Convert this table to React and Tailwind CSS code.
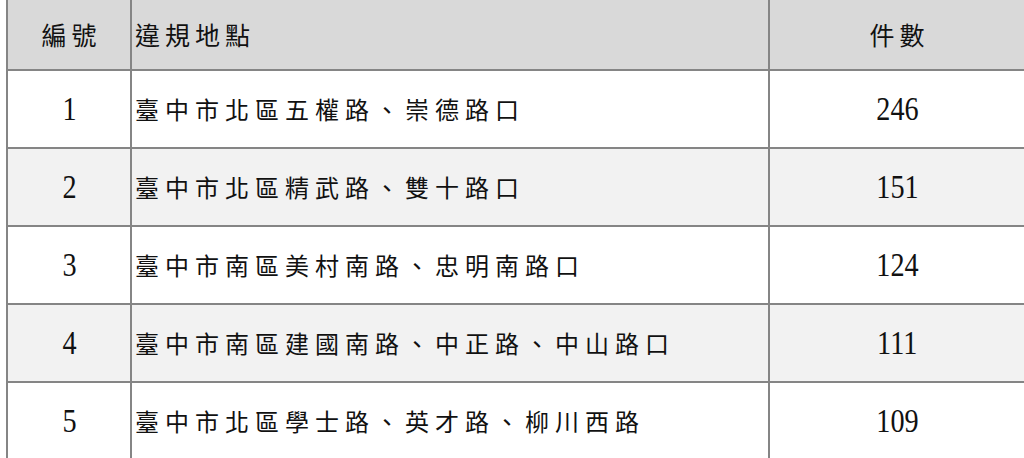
const rows = [
  { id: '1', place: '臺中市北區五權路、崇德路口', count: '246' },
  { id: '2', place: '臺中市北區精武路、雙十路口', count: '151' },
  { id: '3', place: '臺中市南區美村南路、忠明南路口', count: '124' },
  { id: '4', place: '臺中市南區建國南路、中正路、中山路口', count: '111' },
  { id: '5', place: '臺中市北區學士路、英才路、柳川西路', count: '109' },
];

const cjk = { fontFamily: '"Noto Sans CJK TC", "Noto Sans CJK SC", sans-serif' };
const num = { fontFamily: '"Liberation Serif", "DejaVu Serif", serif' };

function Num({ children }) {
  return (
    <span className="inline-block scale-x-[0.83] text-[34px] leading-none text-[#111]" style={num}>
      {children}
    </span>
  );
}

export default function App() {
  return (
    <div className="h-[458px] w-[1024px] overflow-hidden bg-white pl-[6px]">
      <div className="grid h-[71px] grid-cols-[126px_638px_1fr] border-b-2 border-[#858585] bg-[#d9d9d9]">
        <div className="flex items-center justify-center border-x-2 border-[#858585] pl-[5px] text-[25px] tracking-[5px] text-[#111]" style={cjk}>
          編號
        </div>
        <div className="flex items-center border-r-2 border-[#858585] pl-[3px] text-[25px] tracking-[5px] text-[#111]" style={cjk}>
          違規地點
        </div>
        <div className="flex items-center justify-center pl-[5px] text-[25px] tracking-[5px] text-[#111]" style={cjk}>
          件數
        </div>
      </div>
      {rows.map((r, i) => (
        <div
          key={r.id}
          className={`grid h-[78px] grid-cols-[126px_638px_1fr] border-b-2 border-[#858585] ${i % 2 ? 'bg-[#f2f2f2]' : 'bg-white'}`}
        >
          <div className="flex items-center justify-center border-x-2 border-[#858585]">
            <Num>{r.id}</Num>
          </div>
          <div className="flex items-center border-r-2 border-[#858585] pl-[3px] text-[24px] tracking-[6px] text-[#111]" style={cjk}>
            {r.place}
          </div>
          <div className="flex items-center justify-center">
            <Num>{r.count}</Num>
          </div>
        </div>
      ))}
    </div>
  );
}
